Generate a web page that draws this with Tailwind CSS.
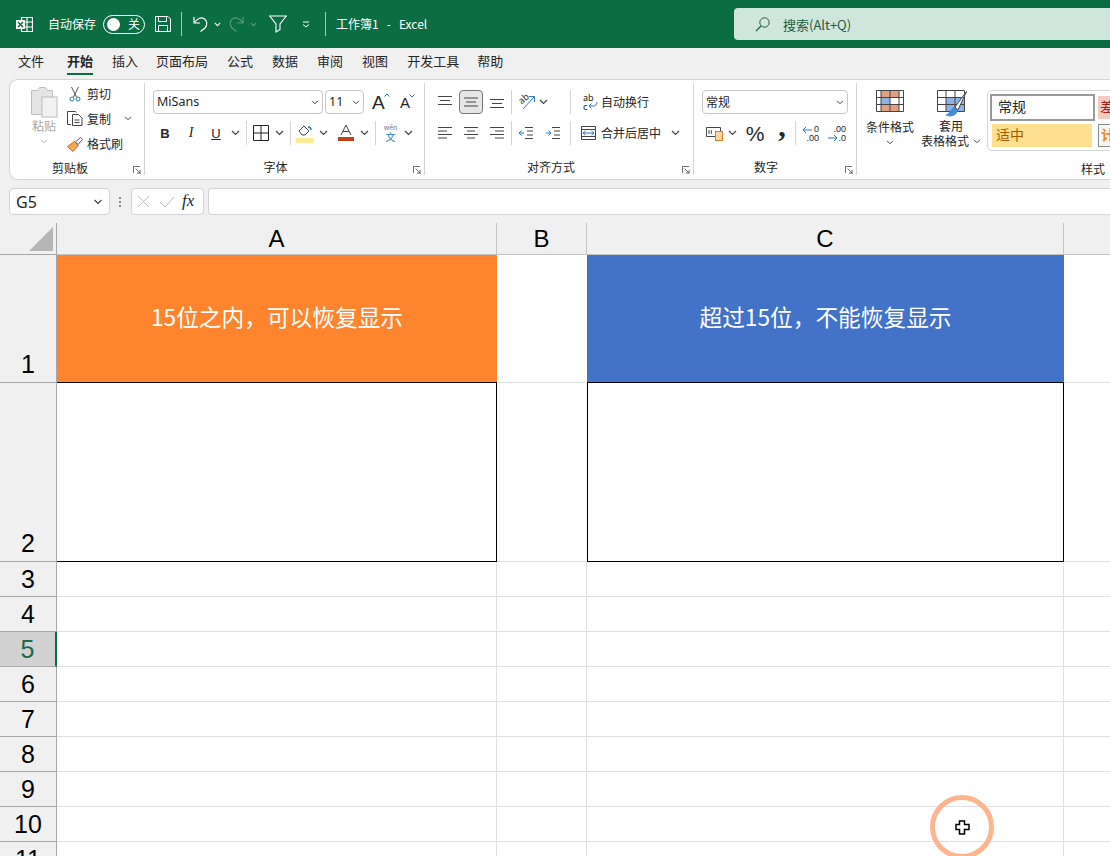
<!DOCTYPE html>
<html lang="zh">
<head>
<meta charset="utf-8">
<script src="https://cdn.jsdelivr.net/npm/@tailwindcss/browser@4"></script>
</head>
<body class="m-0">
<svg class="hidden"><defs>
<symbol id="chev" viewBox="0 0 9 6"><path d="M1 1l3.5 3.5L8 1" fill="none" stroke="#444" stroke-width="1.2"/></symbol>
<symbol id="launch" viewBox="0 0 9 9"><path d="M.5 8V.5H8M3 3l5 5M8 4.5V8H4.5" fill="none" stroke="#555" stroke-width="1"/></symbol>
</defs></svg>
<div class="relative w-[1110px] h-[856px] overflow-hidden whitespace-nowrap bg-[#f0f0f0] text-[#262626] text-[12px] leading-none font-['Noto_Sans_CJK_SC','Noto_Sans',sans-serif]">

<!-- title bar -->
<header class="flex items-center h-12 bg-[#0a6e42] text-white">
  <svg class="shrink-0 ml-[16px] w-[17px] h-[17px]" viewBox="0 0 17 17"><path d="M5.5 1.500h11v14h-11zM5.500 6h11M5.500 11h11M11 1.500v14" fill="none" stroke="#fff" stroke-width="1.200"/><rect x="0" y="4" width="9" height="9" fill="#fff"/><path d="M2 6l5 5M7 6l-5 5" stroke="#0a6e42" stroke-width="1.500"/></svg>
  <span class="ml-[15px] w-[48px] shrink-0 text-[12px]">自动保存</span>
  <div class="shrink-0 ml-[7px] flex items-center w-[42px] h-[19px] border border-white rounded-full">
    <span class="ml-[3px] w-[13px] h-[13px] rounded-full bg-white"></span>
    <span class="ml-[8px] text-[12px]">关</span>
  </div>
  <svg class="shrink-0 ml-[10px] w-[16px] h-[16px]" viewBox="0 0 16 16"><path d="M.5.500h12.500l2.500 2.500v12.500H.500zM3.500.500v5h8v-5M3.500 15.500v-6h9v6" fill="none" stroke="#fff"/></svg>
  <span class="shrink-0 ml-[10px] w-px h-6 bg-white/60"></span>
  <svg class="shrink-0 ml-[11px] w-[15px] h-[16px]" viewBox="0 0 15 16"><path d="M1 1v6h6M1.500 6.500C4 2.500 8 1 11 2.500c3.500 2 3.500 7 1 9.500L7.500 15.500" fill="none" stroke="#fff" stroke-width="1.200"/></svg>
  <svg class="shrink-0 ml-[6px] w-[7px] h-[5px]" viewBox="0 0 9 6"><path d="M1 1l3.500 3.500L8 1" fill="none" stroke="#fff" stroke-width="1.300"/></svg>
  <svg class="shrink-0 ml-[8px] w-[15px] h-[16px] opacity-30" viewBox="0 0 15 16"><path d="M14 1v6H8M13.500 6.500C11 2.500 7 1 4 2.500c-3.500 2-3.500 7-1 9.500l4.500 3.500" fill="none" stroke="#fff" stroke-width="1.200"/></svg>
  <svg class="shrink-0 ml-[6px] w-[7px] h-[5px] opacity-30" viewBox="0 0 9 6"><path d="M1 1l3.500 3.500L8 1" fill="none" stroke="#fff" stroke-width="1.300"/></svg>
  <svg class="shrink-0 ml-[12px] w-[18px] h-[18px]" viewBox="0 0 18 18"><path d="M.7 1h16.600L11 9v5.500L7 17V9z" fill="none" stroke="#fff" stroke-width="1.100"/></svg>
  <svg class="shrink-0 ml-[15px] w-[8px] h-[7px]" viewBox="0 0 8 7"><path d="M1 1h6M1 3.500l3 2.500 3-2.500" fill="none" stroke="#fff"/></svg>
  <span class="shrink-0 ml-[15px] w-px h-6 bg-white/60"></span>
  <span class="shrink-0 ml-[10px] w-[94px] text-[12px] whitespace-pre">工作簿1   -   Excel</span>
  <div class="shrink-0 ml-[304px] flex items-center w-[380px] h-8 rounded-[4px] bg-[#cfe6dd] text-[#1f5c40]">
    <svg class="ml-[21px] w-[15px] h-[15px]" viewBox="0 0 15 15"><circle cx="9.500" cy="5.500" r="4.700" fill="none" stroke="#1f5c40"/><path d="M6 9l-5 5" stroke="#1f5c40" stroke-width="1.100"/></svg>
    <span class="ml-[13px] text-[13px]">搜索(Alt+Q)</span>
  </div>
</header>

<!-- tabs -->
<nav class="flex h-[31px] text-[13px] pt-[6px]">
  <span class="ml-[18px]">文件</span>
  <span class="ml-[23px] relative font-bold">开始<span class="absolute left-0 right-0 top-[19px] h-[2px] bg-[#0a6e42]"></span></span>
  <span class="ml-[19px]">插入</span>
  <span class="ml-[18px]">页面布局</span>
  <span class="ml-[19px]">公式</span>
  <span class="ml-[19px]">数据</span>
  <span class="ml-[19px]">审阅</span>
  <span class="ml-[19px]">视图</span>
  <span class="ml-[19px]">开发工具</span>
  <span class="ml-[18px]">帮助</span>
</nav>

<!-- ribbon -->
<section class="ml-[9px] flex h-[101px] bg-white border border-r-0 border-[#d4d4d4] rounded-l-[9px]">

  <!-- clipboard -->
  <div class="shrink-0 relative w-[135px] h-[92px] mt-[3px] border-r border-[#d4d4d4]">
    <div class="flex h-[74px]">
      <div class="ml-[14px] w-[40px] flex flex-col items-center text-[#a8a8a8]">
        <svg class="mt-[3px] w-[30px] h-[32px]" viewBox="0 0 30 32"><path d="M2.500 4.500h6l2-3h6l2 3h5v24h-21z" fill="#e4e4e4" stroke="#c0c0c0"/><rect x="13" y="11" width="15" height="20" fill="#f2f2f2" stroke="#bcbcbc"/></svg>
        <span class="mt-[2px]">粘贴</span>
        <svg class="mt-[7px] w-[8px] h-[5px] opacity-40"><use href="#chev"/></svg>
      </div>
      <div class="ml-[3px] -mt-[2px] flex flex-col">
        <div class="flex items-center h-[26px]">
          <svg class="ml-[2px] w-[12px] h-[16px]" viewBox="0 0 12 16"><path d="M2.500 1l5 10M9.500 1l-5 10" fill="none" stroke="#555"/><circle cx="3" cy="13" r="2" fill="none" stroke="#2b78c2"/><circle cx="9" cy="13" r="2" fill="none" stroke="#2b78c2"/></svg>
          <span class="ml-[6px]">剪切</span>
        </div>
        <div class="flex items-center h-[26px]">
          <svg class="w-[16px] h-[15px]" viewBox="0 0 16 15"><path d="M4 13.500H.500V.500h8l1 1" fill="none" stroke="#444"/><path d="M5.500 3.500h6l3.500 3.500v7.500H5.500zM7.500 9h5M7.500 11.500h5" fill="#fff" stroke="#444"/></svg>
          <span class="ml-[4px]">复制</span>
          <svg class="ml-[13px] w-[8px] h-[5px]"><use href="#chev"/></svg>
        </div>
        <div class="flex items-center h-[26px]">
          <svg class="w-[16px] h-[15px]" viewBox="0 0 16 15"><path d="M.5 9.500l7-5 4 4-5.500 6z" fill="#f4a658" stroke="#d0691f"/><path d="M8.500 5l5-4.500 2 2-4.500 5z" fill="#fff" stroke="#555"/></svg>
          <span class="ml-[4px]">格式刷</span>
        </div>
      </div>
    </div>
    <div class="text-center w-[120px] h-[16px] leading-[16px] mt-[3px]">剪贴板</div>
    <svg class="absolute right-[3px] bottom-[1px] w-[8px] h-[8px]"><use href="#launch"/></svg>
  </div>

  <!-- font -->
  <div class="shrink-0 relative w-[280px] h-[92px] mt-[3px] border-r border-[#d4d4d4] pt-[7px]">
    <div class="flex items-center h-6">
      <div class="ml-[8px] w-[170px] h-6 flex items-center justify-between border border-[#c8c8c8] rounded-[4px] px-[3px]"><span class="text-[12.500px] font-['Noto_Sans']">MiSans</span><svg class="w-[8px] h-[5px]"><use href="#chev"/></svg></div>
      <div class="ml-[2px] w-[39px] h-6 flex items-center justify-between border border-[#c8c8c8] rounded-[4px] px-[3px]"><span class="text-[12.500px] font-['Noto_Sans']">11</span><svg class="w-[8px] h-[5px]"><use href="#chev"/></svg></div>
      <span class="ml-[8px] w-[18px] font-['Liberation_Sans'] text-[19px] relative">A<svg class="absolute left-[12px] top-[0px] w-[6px] h-[4px]" viewBox="0 0 6 4"><path d="M.5 3.500L3 1l2.500 2.500" fill="none" stroke="#2b78c2"/></svg></span>
      <span class="ml-[10px] w-[18px] font-['Liberation_Sans'] text-[15px] relative">A<svg class="absolute left-[9px] top-[-1px] w-[6px] h-[4px]" viewBox="0 0 6 4"><path d="M.5.500L3 3 5.500.500" fill="none" stroke="#2b78c2"/></svg></span>
    </div>
    <div class="flex items-center h-6 mt-[7px]">
      <span class="ml-[12px] w-[16px] text-center font-bold font-['Liberation_Sans'] text-[13px]">B</span>
      <span class="ml-[10px] w-[16px] text-center italic font-['Liberation_Serif'] text-[14px]">I</span>
      <span class="ml-[9px] w-[16px] text-center underline font-['Liberation_Sans'] text-[13px]">U</span>
      <svg class="ml-[7px] w-[9px] h-[6px]"><use href="#chev"/></svg>
      <span class="ml-[6px] w-px h-6 bg-[#d4d4d4]"></span>
      <svg class="ml-[6px] w-[16px] h-[16px]" viewBox="0 0 16 16"><path d="M.5.500h15v15H.500zM8 .500v15M.500 8h15" fill="none" stroke="#222"/></svg>
      <svg class="ml-[6px] w-[9px] h-[6px]"><use href="#chev"/></svg>
      <span class="ml-[6px] w-px h-6 bg-[#d4d4d4]"></span>
      <svg class="ml-[5px] w-[18px] h-[20px]" viewBox="0 0 18 20"><path d="M3 8l5-5 5 5-4 4H6z" fill="#fff" stroke="#444"/><path d="M12 4c2 0 3 1 3 3" fill="none" stroke="#2b78c2" stroke-width="1.500"/><rect y="15" width="18" height="5" fill="#fdeb96"/></svg>
      <svg class="ml-[5px] w-[9px] h-[6px]"><use href="#chev"/></svg>
      <svg class="ml-[10px] w-[16px] h-[18px]" viewBox="0 0 16 18"><path d="M3 11l5-10 5 10M5 7.500h6" fill="none" stroke="#444"/><rect y="13" width="16" height="4" fill="#c0401c"/></svg>
      <svg class="ml-[6px] w-[9px] h-[6px]"><use href="#chev"/></svg>
      <span class="ml-[6px] w-px h-6 bg-[#d4d4d4]"></span>
      <div class="ml-[6px] w-[17px] flex flex-col items-center"><span class="text-[7px] text-[#777]">wén</span><span class="mt-[1px] text-[10px] text-[#2b78c2]">文</span></div>
      <svg class="ml-[5px] w-[9px] h-[6px]"><use href="#chev"/></svg>
    </div>
    <div class="absolute bottom-0 left-0 w-[261px] text-center leading-[16px]">字体</div>
    <svg class="absolute right-[3px] bottom-[1px] w-[8px] h-[8px]"><use href="#launch"/></svg>
  </div>

  <!-- alignment -->
  <div class="shrink-0 relative w-[269px] h-[92px] mt-[3px] border-r border-[#d4d4d4] pt-[7px]">
    <div class="flex items-center h-6">
      <svg class="ml-[13px] w-[14px] h-[14px]" viewBox="0 0 14 14"><path d="M0 1.500h14M2 5.500h10M0 9.500h14" stroke="#444"/></svg>
      <div class="ml-[7px] w-[24px] h-[24px] flex items-center justify-center bg-[#e6e6e6] border border-[#777] rounded-[4px]"><svg class="w-[14px] h-[14px]" viewBox="0 0 14 14"><path d="M0 3h14M2 7h10M0 11h14" stroke="#444"/></svg></div>
      <svg class="ml-[7px] w-[14px] h-[14px]" viewBox="0 0 14 14"><path d="M0 4.500h14M2 8.500h10M0 12.500h14" stroke="#444"/></svg>
      <span class="ml-[7px] w-px h-6 bg-[#d4d4d4]"></span>
      <div class="ml-[6px] w-[18px] h-[18px] relative"><span class="absolute left-0 top-[1px] text-[9px] rotate-[-40deg]">ab</span><svg class="absolute inset-0 w-[18px] h-[18px]" viewBox="0 0 18 18"><path d="M5 16L16 4M11 3.500h5.500V9" fill="none" stroke="#2b78c2"/></svg></div>
      <svg class="ml-[3px] w-[9px] h-[6px]"><use href="#chev"/></svg>
      <span class="ml-[22px] w-px h-6 bg-[#d4d4d4]"></span>
      <div class="ml-[12px] w-[15px] h-[16px] relative"><span class="absolute left-0 top-[-1px] text-[9px]">ab</span><span class="absolute left-0 top-[8px] text-[9px]">c</span><svg class="absolute inset-0 w-[15px] h-[16px]" viewBox="0 0 15 16"><path d="M14 8c0 3-2 4-4 4H6M8.500 9.500L6 12l2.500 2.500" fill="none" stroke="#2b78c2"/></svg></div>
      <span class="ml-[3px]">自动换行</span>
    </div>
    <div class="flex items-center h-6 mt-[7px]">
      <svg class="ml-[13px] w-[14px] h-[14px]" viewBox="0 0 14 14"><path d="M0 1.500h14M0 5h9M0 8.500h14M0 12h9" stroke="#444"/></svg>
      <svg class="ml-[12px] w-[14px] h-[14px]" viewBox="0 0 14 14"><path d="M0 1.500h14M3 5h8M0 8.500h14M3 12h8" stroke="#444"/></svg>
      <svg class="ml-[12px] w-[14px] h-[14px]" viewBox="0 0 14 14"><path d="M0 1.500h14M5 5h9M0 8.500h14M5 12h9" stroke="#444"/></svg>
      <span class="ml-[7px] w-px h-6 bg-[#d4d4d4]"></span>
      <svg class="ml-[6px] w-[15px] h-[14px]" viewBox="0 0 15 14"><path d="M7 1.500h8M9 5h6M9 9h6M7 12.500h8" stroke="#444"/><path d="M6 7H1M3.500 4.500L1 7l2.500 2.500" fill="none" stroke="#2b78c2"/></svg>
      <svg class="ml-[12px] w-[15px] h-[14px]" viewBox="0 0 15 14"><path d="M7 1.500h8M9 5h6M9 9h6M7 12.500h8" stroke="#444"/><path d="M1 7h5M3.500 4.500L6 7 3.500 9.500" fill="none" stroke="#2b78c2"/></svg>
      <span class="ml-[10px] w-px h-6 bg-[#d4d4d4]"></span>
      <svg class="ml-[10px] w-[15px] h-[14px]" viewBox="0 0 15 14"><path d="M.5.500h14v13H.500zM.500 3.500h14M.500 10.500h14" fill="none" stroke="#444"/><path d="M2 7h11M4.500 5L2 7l2.500 2M10.500 5L13 7l-2.500 2" fill="none" stroke="#2b78c2"/></svg>
      <span class="ml-[5px]">合并后居中</span>
      <svg class="ml-[10px] w-[9px] h-[6px]"><use href="#chev"/></svg>
    </div>
    <div class="absolute bottom-0 left-0 w-[252px] text-center leading-[16px]">对齐方式</div>
    <svg class="absolute right-[3px] bottom-[1px] w-[8px] h-[8px]"><use href="#launch"/></svg>
  </div>

  <!-- number -->
  <div class="shrink-0 relative w-[163px] h-[92px] mt-[3px] border-r border-[#d4d4d4] pt-[7px]">
    <div class="flex items-center h-6">
      <div class="ml-[8px] w-[146px] h-6 flex items-center justify-between border border-[#c8c8c8] rounded-[4px] px-[3px]"><span>常规</span><svg class="w-[8px] h-[5px]"><use href="#chev"/></svg></div>
    </div>
    <div class="flex items-center h-6 mt-[7px]">
      <svg class="ml-[12px] w-[17px] h-[15px]" viewBox="0 0 17 15"><path d="M.5 1.500h14v9H.500z" fill="none" stroke="#444"/><path d="M3 4v4M6 4c-1 0-1 4 0 4" fill="none" stroke="#444"/><rect x="9.500" y="5.500" width="7" height="9" fill="#fbd5a8" stroke="#e07b28"/></svg>
      <svg class="ml-[5px] w-[9px] h-[6px]"><use href="#chev"/></svg>
      <span class="ml-[10px] w-[16px] flex justify-center text-[21px] font-['Liberation_Sans']">%</span>
      <span class="ml-[13px] w-[12px] text-center text-[30px] font-bold font-['Liberation_Serif'] -mt-[14px]">,</span>
      <span class="ml-[7px] w-px h-6 bg-[#d4d4d4]"></span>
      <div class="ml-[6px] w-[17px] h-[17px] relative font-['Liberation_Sans'] text-[9px]"><span class="absolute right-0 top-0">0</span><span class="absolute right-0 top-[9px]">.00</span><svg class="absolute left-0 top-[1px] w-[10px] h-[8px]" viewBox="0 0 10 8"><path d="M10 4H1M4 1L1 4l3 3" fill="none" stroke="#2b78c2"/></svg></div>
      <div class="ml-[9px] w-[18px] h-[17px] relative font-['Liberation_Sans'] text-[9px]"><span class="absolute right-0 top-0">.00</span><span class="absolute right-0 top-[9px]">.0</span><svg class="absolute left-0 top-[9px] w-[10px] h-[8px]" viewBox="0 0 10 8"><path d="M0 4h9M6 1l3 3-3 3" fill="none" stroke="#2b78c2"/></svg></div>
    </div>
    <div class="absolute bottom-0 left-0 w-[144px] text-center leading-[16px]">数字</div>
    <svg class="absolute right-[3px] bottom-[1px] w-[8px] h-[8px]"><use href="#launch"/></svg>
  </div>

  <!-- styles -->
  <div class="relative flex-1 pt-[10px] flex overflow-hidden">
    <div class="shrink-0 ml-[9px] w-[48px] flex flex-col items-center">
      <svg class="w-[28px] h-[22px]" viewBox="0 0 28 22"><rect x="5" y="1" width="18" height="7" fill="#e49f80"/><rect x="5" y="8" width="9" height="7" fill="#8db4e2"/><rect x="5" y="15" width="18" height="6" fill="#e49f80"/><path d="M.5.500h27v21H.500zM.500 7.500h27M.500 14.500h27M5 .500v21M14 .500v21M23 .500v21" fill="none" stroke="#444"/></svg>
      <span class="mt-[9px]">条件格式</span>
      <svg class="mt-[7px] w-[8px] h-[5px]"><use href="#chev"/></svg>
    </div>
    <div class="shrink-0 ml-[7px] w-[60px] flex flex-col">
      <svg class="ml-[16px] w-[31px] h-[31px]" viewBox="0 0 31 31"><rect x="9" y="7" width="18" height="14" fill="#8db4e2"/><path d="M.5.500h27v21H.500zM.500 7.500h27M.500 14.500h27M9 .500v21M18 .500v21" fill="none" stroke="#444"/><path d="M29.500 1.500L18 17l3 3z" fill="#fff" stroke="#444"/><path d="M17 17c-4 2-3 6-9 8 5 3 12 1 13-5z" fill="#3f8fd6"/></svg>
      <span class="ml-[18px] -mt-[1px]">套用</span>
      <div class="flex items-center mt-[3px]"><span>表格格式</span><svg class="ml-[4px] w-[8px] h-[5px]"><use href="#chev"/></svg></div>
    </div>
    <div class="ml-[6px] w-[150px] h-[61px] border border-[#d4d4d4] rounded-[5px] relative shrink-0">
      <div class="absolute left-[2px] top-[3px] w-[105px] h-[27px] bg-white border-2 border-[#9a9a9a] flex items-center pl-[6px] pb-[3px] text-[14px]">常规</div>
      <div class="absolute left-[110px] top-[5px] w-[40px] h-[23px] bg-[#f6c9c3] flex items-center pl-[2px] pb-[3px] text-[14px] text-[#a8201a]">差</div>
      <div class="absolute left-[4px] top-[33px] w-[100px] h-[23px] bg-[#ffe08f] flex items-center pl-[4px] pb-[3px] text-[14px] text-[#a85a00]">适中</div>
      <div class="absolute left-[110px] top-[33px] w-[40px] h-[23px] bg-[#f5f5f5] border border-[#8a8a8a] flex items-center pl-[2px] pb-[3px] text-[14px] font-bold text-[#f08a1c]">计</div>
    </div>
    <div class="absolute left-[224px] top-[81px] leading-[16px]">样式</div>
  </div>
</section>

<!-- formula bar -->
<div class="flex items-center h-[43px] pt-[8px] pb-[8px] ml-[9px]">
  <div class="shrink-0 w-[101px] h-[27px] flex items-center justify-between bg-white border border-[#d4d4d4] rounded-[4px] pl-[6px] pr-[6px]"><span class="text-[16px] font-['Noto_Sans']">G5</span><svg class="w-[10px] h-[6px]"><use href="#chev"/></svg></div>
  <div class="ml-[9px] w-[3px] flex flex-col gap-[2px]"><span class="w-[2px] h-[2px] bg-[#888]"></span><span class="w-[2px] h-[2px] bg-[#888]"></span><span class="w-[2px] h-[2px] bg-[#888]"></span></div>
  <div class="shrink-0 ml-[9px] w-[73px] h-[27px] flex items-center bg-white border border-[#d4d4d4] rounded-[4px]">
    <svg class="ml-[5px] w-[13px] h-[13px]" viewBox="0 0 13 13"><path d="M1 1l11 11M12 1L1 12" stroke="#bdbdbd"/></svg>
    <svg class="ml-[9px] w-[16px] h-[12px]" viewBox="0 0 16 12"><path d="M1 6l5 5L15 1" fill="none" stroke="#bdbdbd"/></svg>
    <span class="ml-[7px] italic font-['Liberation_Serif'] text-[17px] -mt-[2px]">fx</span>
  </div>
  <div class="ml-[4px] flex-1 h-[27px] bg-white border border-r-0 border-[#d4d4d4] rounded-l-[4px]"></div>
</div>

<!-- sheet -->
<div class="grid grid-cols-[57px_440px_90px_477px_46px] grid-rows-[32px_128px_179px_repeat(9,35px)] text-[25px] text-black font-['Liberation_Sans'] bg-white">
  <div class="relative border-b border-r border-[#a8a8a8] bg-[#f0f0f0]"><svg class="absolute left-[29px] top-[4px] w-[24px] h-[24px]" viewBox="0 0 24 24"><path d="M24 0v24H0z" fill="#b5b5b5"/></svg></div>
  <div class="flex items-center justify-center bg-[#f0f0f0] border-r border-b border-[#c4c4c4] text-[24px]">A</div>
  <div class="flex items-center justify-center bg-[#f0f0f0] border-r border-b border-[#c4c4c4] text-[24px]">B</div>
  <div class="flex items-center justify-center bg-[#f0f0f0] border-r border-b border-[#c4c4c4] text-[24px]">C</div>
  <div class="bg-[#f0f0f0] border-b border-[#c4c4c4]"></div>

  <div class="flex items-end justify-center pb-[5px] bg-[#f0f0f0] border-r border-b border-[#a8a8a8]">1</div>
  <div class="flex items-center justify-center pb-[2px] bg-[#fe852e] border-b border-black text-white text-[22.700px] font-['Noto_Sans_CJK_SC']">15位之内，可以恢复显示</div>
  <div class="border-b border-[#e0e0e0]"></div>
  <div class="flex items-center justify-center pb-[2px] bg-[#4372c9] border-b border-black text-white text-[22.700px] font-['Noto_Sans_CJK_SC']">超过15位，不能恢复显示</div>
  <div class="border-b border-[#e0e0e0]"></div>

  <div class="flex items-end justify-center pb-[5px] bg-[#f0f0f0] border-r border-b border-[#a8a8a8]">2</div>
  <div class="border-r border-b border-black"></div>
  <div class="border-b border-[#e0e0e0]"></div>
  <div class="border-x border-b border-black"></div>
  <div class="border-b border-[#e0e0e0]"></div>

  <div class="flex items-center justify-center bg-[#f0f0f0] border-r border-b border-[#a8a8a8]">3</div>
  <div class="border-r border-b border-[#e0e0e0]"></div><div class="border-r border-b border-[#e0e0e0]"></div><div class="border-r border-b border-[#e0e0e0]"></div><div class="border-b border-[#e0e0e0]"></div>

  <div class="flex items-center justify-center bg-[#f0f0f0] border-r border-b border-[#a8a8a8]">4</div>
  <div class="border-r border-b border-[#e0e0e0]"></div><div class="border-r border-b border-[#e0e0e0]"></div><div class="border-r border-b border-[#e0e0e0]"></div><div class="border-b border-[#e0e0e0]"></div>

  <div class="flex items-center justify-center bg-[#d2d2d2] border-r-2 border-r-[#0a6e42] border-b border-b-[#a8a8a8] text-[#1a6b4a]">5</div>
  <div class="border-r border-b border-[#e0e0e0]"></div><div class="border-r border-b border-[#e0e0e0]"></div><div class="border-r border-b border-[#e0e0e0]"></div><div class="border-b border-[#e0e0e0]"></div>

  <div class="flex items-center justify-center bg-[#f0f0f0] border-r border-b border-[#a8a8a8]">6</div>
  <div class="border-r border-b border-[#e0e0e0]"></div><div class="border-r border-b border-[#e0e0e0]"></div><div class="border-r border-b border-[#e0e0e0]"></div><div class="border-b border-[#e0e0e0]"></div>

  <div class="flex items-center justify-center bg-[#f0f0f0] border-r border-b border-[#a8a8a8]">7</div>
  <div class="border-r border-b border-[#e0e0e0]"></div><div class="border-r border-b border-[#e0e0e0]"></div><div class="border-r border-b border-[#e0e0e0]"></div><div class="border-b border-[#e0e0e0]"></div>

  <div class="flex items-center justify-center bg-[#f0f0f0] border-r border-b border-[#a8a8a8]">8</div>
  <div class="border-r border-b border-[#e0e0e0]"></div><div class="border-r border-b border-[#e0e0e0]"></div><div class="border-r border-b border-[#e0e0e0]"></div><div class="border-b border-[#e0e0e0]"></div>

  <div class="flex items-center justify-center bg-[#f0f0f0] border-r border-b border-[#a8a8a8]">9</div>
  <div class="border-r border-b border-[#e0e0e0]"></div><div class="border-r border-b border-[#e0e0e0]"></div><div class="border-r border-b border-[#e0e0e0]"></div><div class="border-b border-[#e0e0e0]"></div>

  <div class="flex items-center justify-center bg-[#f0f0f0] border-r border-b border-[#a8a8a8]">10</div>
  <div class="border-r border-b border-[#e0e0e0]"></div><div class="border-r border-b border-[#e0e0e0]"></div><div class="border-r border-b border-[#e0e0e0]"></div><div class="border-b border-[#e0e0e0]"></div>

  <div class="flex items-center justify-center bg-[#f0f0f0] border-r border-b border-[#a8a8a8]">11</div>
  <div class="border-r border-b border-[#e0e0e0]"></div><div class="border-r border-b border-[#e0e0e0]"></div><div class="border-r border-b border-[#e0e0e0]"></div><div class="border-b border-[#e0e0e0]"></div>
</div>

<!-- click highlight and cursor -->
<div class="absolute left-[930px] top-[795px] w-[64px] h-[64px] rounded-full border-[5px] border-[#fdb58f]"></div>
<svg class="absolute left-[955px] top-[820px] w-[15px] h-[15px]" viewBox="0 0 15 15"><path d="M4.500 1h5v3.500H14v5H9.500V14h-5V9.500H1v-5h3.500z" fill="#fff" stroke="#000" stroke-width="1.500"/></svg>
</div>
</body>
</html>
